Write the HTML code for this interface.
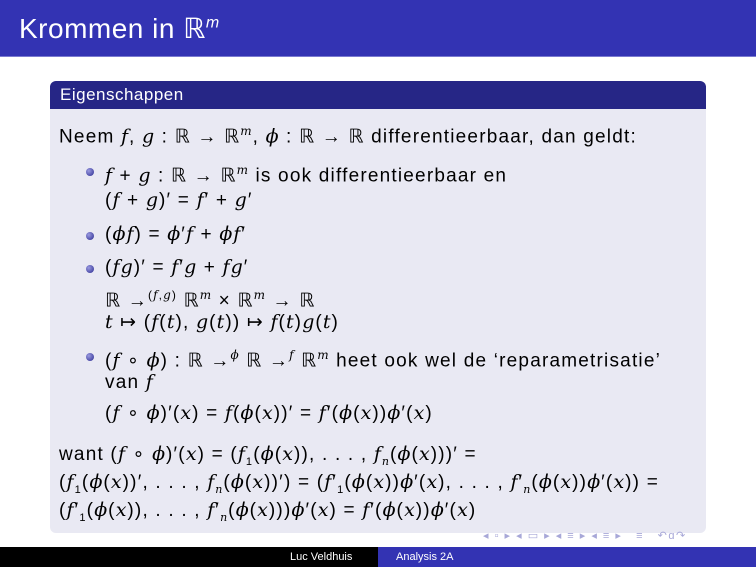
<!DOCTYPE html>
<html><head><meta charset="utf-8"><style>
body{margin:0;width:756px;height:567px;position:relative;background:#fff;overflow:hidden;font-family:"Liberation Sans","DejaVu Sans",sans-serif;color:#000}
.hd{position:absolute;left:0;top:0;width:756px;height:56px;background:#3333b3;border-bottom:1px solid #7a7ad0}
.hd span{position:absolute;left:19px;top:12px;color:#fff;font-size:28px;letter-spacing:0.5px}
.bt{position:absolute;left:50px;top:81px;width:656px;height:28px;background:#262686;border-radius:6px 6px 0 0}
.bt span{position:absolute;left:10px;top:4px;color:#fff;font-size:17px;letter-spacing:0.5px}
.bb{position:absolute;left:50px;top:109px;width:656px;height:424px;background:#e9e9f3;border-radius:0 0 6px 6px}
.l{position:absolute;font-size:19px;white-space:nowrap;line-height:20px;letter-spacing:1.2px}
i{font-family:"DejaVu Serif","Liberation Serif",serif;font-style:italic;letter-spacing:1px}
.dot{position:absolute;width:8px;height:8px;border-radius:50%;background:radial-gradient(circle at 35% 35%,#9a9ae0,#2a2a90)}
.ft{position:absolute;top:547px;height:20px;font-size:11px;color:#fff;line-height:20px}
.nav{position:absolute;top:529px;left:483px;font-size:11px;color:#a8a8d8;letter-spacing:1.5px}
</style></head><body>
<div class="hd"><span>Krommen in ℝ<sup style="font-size:16px;font-style:italic">m</sup></span></div>
<div class="bt"><span>Eigenschappen</span></div>
<div class="bb"></div>
<div class="l" style="left:59px;top:121px">Neem <i>f</i>, <i>g</i> : ℝ → ℝ<sup style="font-size:12px"><i>m</i></sup>, <i>ϕ</i> : ℝ → ℝ differentieerbaar, dan geldt:</div>
<div class="dot" style="left:86px;top:168px"></div>
<div class="l" style="left:105px;top:160px"><i>f</i> + <i>g</i> : ℝ → ℝ<sup style="font-size:12px"><i>m</i></sup> is ook differentieerbaar en</div>
<div class="l" style="left:105px;top:190px">(<i>f</i> + <i>g</i>)′ = <i>f</i>′ + <i>g</i>′</div>
<div class="dot" style="left:86px;top:232px"></div>
<div class="l" style="left:105px;top:224px">(<i>ϕf</i>) = <i>ϕ</i>′<i>f</i> + <i>ϕf</i>′</div>
<div class="dot" style="left:86px;top:265px"></div>
<div class="l" style="left:105px;top:257px">(<i>fg</i>)′ = <i>f</i>′<i>g</i> + <i>fg</i>′</div>
<div class="l" style="left:105px;top:285px">ℝ →<sup style="font-size:12px">(<i>f</i>,<i>g</i>)</sup> ℝ<sup style="font-size:12px"><i>m</i></sup> × ℝ<sup style="font-size:12px"><i>m</i></sup> → ℝ</div>
<div class="l" style="left:105px;top:312px"><i>t</i> ↦ (<i>f</i>(<i>t</i>), <i>g</i>(<i>t</i>)) ↦ <i>f</i>(<i>t</i>)<i>g</i>(<i>t</i>)</div>
<div class="dot" style="left:86px;top:353px"></div>
<div class="l" style="left:105px;top:345px">(<i>f</i> ∘ <i>ϕ</i>) : ℝ →<sup style="font-size:12px"><i>ϕ</i></sup> ℝ →<sup style="font-size:12px"><i>f</i></sup> ℝ<sup style="font-size:12px"><i>m</i></sup> heet ook wel de ‘reparametrisatie’</div>
<div class="l" style="left:105px;top:372px">van <i>f</i></div>
<div class="l" style="left:105px;top:403px">(<i>f</i> ∘ <i>ϕ</i>)′(<i>x</i>) = <i>f</i>(<i>ϕ</i>(<i>x</i>))′ = <i>f</i>′(<i>ϕ</i>(<i>x</i>))<i>ϕ</i>′(<i>x</i>)</div>
<div class="l" style="left:59px;top:444px">want (<i>f</i> ∘ <i>ϕ</i>)′(<i>x</i>) = (<i>f</i><sub style="font-size:11px">1</sub>(<i>ϕ</i>(<i>x</i>)), . . . , <i>f<sub style="font-size:11px">n</sub></i>(<i>ϕ</i>(<i>x</i>)))′ =</div>
<div class="l" style="left:59px;top:472px">(<i>f</i><sub style="font-size:11px">1</sub>(<i>ϕ</i>(<i>x</i>))′, . . . , <i>f<sub style="font-size:11px">n</sub></i>(<i>ϕ</i>(<i>x</i>))′) = (<i>f</i>′<sub style="font-size:11px">1</sub>(<i>ϕ</i>(<i>x</i>))<i>ϕ</i>′(<i>x</i>), . . . , <i>f</i>′<sub style="font-size:11px"><i>n</i></sub>(<i>ϕ</i>(<i>x</i>))<i>ϕ</i>′(<i>x</i>)) =</div>
<div class="l" style="left:59px;top:500px">(<i>f</i>′<sub style="font-size:11px">1</sub>(<i>ϕ</i>(<i>x</i>)), . . . , <i>f</i>′<sub style="font-size:11px"><i>n</i></sub>(<i>ϕ</i>(<i>x</i>)))<i>ϕ</i>′(<i>x</i>) = <i>f</i>′(<i>ϕ</i>(<i>x</i>))<i>ϕ</i>′(<i>x</i>)</div>
<div class="nav">◂ ▫ ▸ ◂ ▭ ▸ ◂ ≡ ▸ ◂ ≡ ▸ &nbsp; ≡ &nbsp; ↶ɑ↷</div>
<div class="ft" style="left:0;width:378px;background:#000"><span style="position:absolute;left:290px">Luc Veldhuis</span></div>
<div class="ft" style="left:378px;width:378px;background:#3333b3"><span style="position:absolute;left:18px">Analysis 2A</span></div>
</body></html>
